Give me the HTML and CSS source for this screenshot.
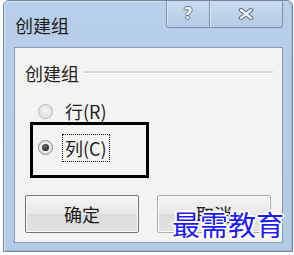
FILE: index.html
```html
<!DOCTYPE html>
<html>
<head>
<meta charset="utf-8">
<link rel="stylesheet" href="styles.css">
</head>
<body>
<div class="window">
  <div class="titlebar">
    <div class="title">创建组</div>
    <div class="caption-buttons">
      <div class="cap-btn help"><span class="help-glyph">?</span></div>
      <div class="cap-btn close">
        <svg width="16" height="12" viewBox="0 0 16 12">
          <path d="M3 2 L13 10 M13 2 L3 10" stroke="#5d6b7b" stroke-width="4.4" stroke-linecap="round"/>
          <path d="M3 2 L13 10 M13 2 L3 10" stroke="#f4f7fa" stroke-width="2.4" stroke-linecap="round"/>
        </svg>
      </div>
    </div>
  </div>
  <div class="panel">
    <div class="group-head">
      <span class="group-label">创建组</span>
      <span class="group-line"></span>
    </div>
    <div class="radio-row">
      <span class="radio"></span>
      <span class="radio-text">行(R)</span>
    </div>
    <div class="highlight">
      <span class="radio checked"><span class="dot"></span></span>
      <span class="radio-text focus">列(C)</span>
    </div>
    <div class="buttons">
      <div class="btn default">确定</div>
      <div class="btn">取消</div>
    </div>
    <div class="watermark">最需教育</div>
  </div>
</div>
</body>
</html>
```

FILE: styles.css
```css
html, body {
  margin: 0;
  padding: 0;
  background: #ffffff;
}
body {
  width: 294px;
  height: 255px;
  overflow: hidden;
  font-family: "Noto Sans CJK SC", "Microsoft YaHei", sans-serif;
}
.window {
  position: relative;
  margin-left: 3px;
  width: 290px;
  height: 252px;
  box-sizing: border-box;
  border: 1px solid #6f8399;
  border-radius: 6px 6px 0 0;
  background: linear-gradient(#b7cfe8, #b3cbe5);
  box-shadow: inset 1px 1px 0 #d6e4f3, inset -1px -1px 0 #9fb7d1;
  padding: 0 9px 8px 10px;
  display: flex;
  flex-direction: column;
}
.titlebar {
  height: 46px;
  display: flex;
  align-items: flex-start;
}
.title {
  margin-left: 1px;
  padding-top: 13px;
  font-size: 18px;
  line-height: 22px;
  color: #1c1c1c;
}
.caption-buttons {
  margin-left: auto;
  display: flex;
}
.cap-btn {
  height: 26px;
  border: 1px solid #7d92aa;
  border-top: none;
  background: linear-gradient(#c9dbee, #b5cce5);
  display: flex;
  align-items: center;
  justify-content: center;
  box-shadow: inset 1px 0 0 #dbe7f4;
}
.help {
  width: 42px;
  border-radius: 0 0 0 3px;
}
.close {
  width: 72px;
  border-left: none;
  border-radius: 0 0 3px 0;
}
.help-glyph {
  font-family: "DejaVu Sans", sans-serif;
  font-weight: bold;
  font-size: 15px;
  line-height: 15px;
  color: #eef3f8;
  text-shadow: 1px 0 0 #6b7a8b, -1px 0 0 #6b7a8b, 0 1px 0 #6b7a8b, 0 -1px 0 #6b7a8b;
}
.panel {
  position: relative;
  flex: 1;
  background: #f3f3f1;
  border: 1px solid #8b9bad;
  padding: 0;
}
.group-head {
  display: flex;
  align-items: center;
  padding-top: 14px;
  padding-left: 10px;
  height: 22px;
}
.group-label {
  font-size: 18px;
  line-height: 22px;
  color: #222;
}
.group-line {
  flex: 1;
  margin-left: 6px;
  margin-right: 9px;
  margin-top: -2px;
  height: 0;
  border-top: 2px solid #d6d6d6;
  border-bottom: 1px solid #ffffff;
}
.radio-row {
  display: flex;
  align-items: center;
  margin-top: 16px;
  padding-left: 23px;
  height: 22px;
}
.radio {
  width: 13px;
  height: 13px;
  border: 1px solid #b9b9b9;
  border-radius: 50%;
  background: radial-gradient(circle at 50% 45%, #f6f6f6 0, #e2e2e2 70%, #d6d6d6 100%);
  display: flex;
  align-items: center;
  justify-content: center;
  flex-shrink: 0;
}
.radio.checked {
  border-color: #8a8a8a;
}
.dot {
  width: 7px;
  height: 7px;
  border-radius: 50%;
  background: radial-gradient(circle at 40% 35%, #6a6a6a 0, #2a2a2a 70%, #1a1a1a 100%);
}
.radio-text {
  margin-left: 12px;
  font-size: 18px;
  line-height: 22px;
  color: #1e1e1e;
}
.highlight {
  margin-left: 15px;
  width: 108px;
  height: 45px;
  border: 3px solid #000;
  display: flex;
  align-items: center;
  padding-left: 5px;
  padding-bottom: 5px;
  box-sizing: content-box;
}
.focus {
  margin-left: 9px;
  padding: 2px;
  border: 1px dotted #111;
}
.buttons {
  display: flex;
  margin-top: 17px;
  padding-left: 10px;
  gap: 18px;
}
.btn {
  width: 112px;
  height: 36px;
  border: 1px solid #acacac;
  border-radius: 2px;
  background: linear-gradient(#f4f4f4, #e8e8e8 50%, #dcdcdc 51%, #e2e2e2);
  display: flex;
  align-items: center;
  justify-content: center;
  font-size: 18px;
  color: #1a1a1a;
  box-shadow: inset 0 0 0 1px #fbfbfb;
}
.btn.default {
  border-color: #747474;
}
.watermark {
  position: absolute;
  left: 157px;
  top: 160px;
  white-space: nowrap;
  font-family: "Noto Sans CJK SC", sans-serif;
  font-size: 28px;
  line-height: 32px;
  color: #1c1cf5;
  text-shadow: 2px 0 0 #fff, -2px 0 0 #fff, 0 2px 0 #fff, 0 -2px 0 #fff,
    1px 1px 0 #fff, -1px -1px 0 #fff, 1px -1px 0 #fff, -1px 1px 0 #fff;
}
```
